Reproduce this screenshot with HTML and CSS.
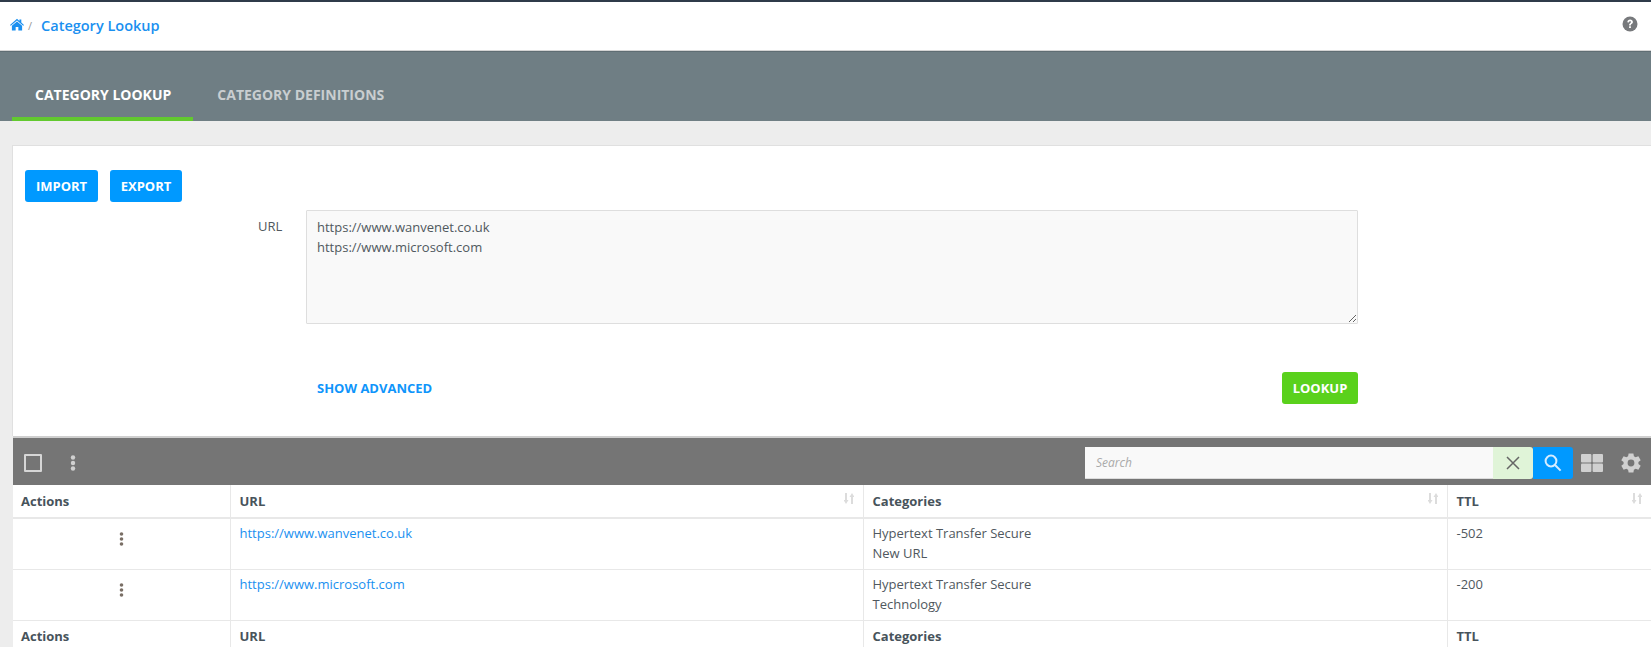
FILE: index.html
```html
<!DOCTYPE html>
<html lang="en">
<head>
<meta charset="utf-8">
<title>Category Lookup</title>
<link rel="stylesheet" href="styles.css">
</head>
<body>
<header class="topbar">
  <nav class="crumbs">
    <svg class="home" viewBox="0 0 26 22" aria-hidden="true"><path d="M13 0.5 L17.5 4.4 V1.5 H21 V7.4 L26 11.8 L24.6 13.4 L13 3.4 L1.4 13.4 L0 11.8 Z M13 5.2 L22.5 13.4 V22 H15.5 V15.5 H10.5 V22 H3.5 V13.4 Z"/></svg>
    <span class="sep">/</span>
    <a class="crumb" href="#">Category Lookup</a>
  </nav>
  <svg class="help" viewBox="0 0 16 16" aria-hidden="true"><circle cx="8" cy="8" r="7.5" fill="#77797c"/><path d="M5.3 6.2 C5.4 4.5 6.6 3.6 8.1 3.6 C9.7 3.6 10.9 4.6 10.9 6 C10.9 7.1 10.2 7.6 9.5 8.1 C9 8.4 8.9 8.7 8.9 9.4 H7.1 C7.1 8.3 7.3 7.7 8.1 7.2 C8.7 6.8 9 6.6 9 6.1 C9 5.6 8.6 5.2 8 5.2 C7.4 5.2 7 5.6 6.9 6.4 Z M7.1 10.2 H8.9 V12.1 H7.1 Z" fill="#fff"/></svg>
</header>

<div class="tabs">
  <a class="tab active" href="#">CATEGORY LOOKUP</a>
  <a class="tab" href="#">CATEGORY DEFINITIONS</a>
</div>

<main class="content">
  <section class="card">
    <div class="actions">
      <button class="btn blue import">IMPORT</button>
      <button class="btn blue export">EXPORT</button>
    </div>
    <div class="field">
      <label class="field-label" for="url">URL</label>
      <textarea class="url-input" id="url" spellcheck="false">https://www.wanvenet.co.uk
https://www.microsoft.com</textarea>
    </div>
    <div class="form-foot">
      <a class="advanced" href="#">SHOW ADVANCED</a>
      <button class="btn green lookup">LOOKUP</button>
    </div>
  </section>

  <section class="grid">
    <div class="toolbar">
      <div class="tool-left">
        <span class="checkbox"></span>
        <svg class="kebab-light" viewBox="0 0 6 16" aria-hidden="true"><circle cx="3" cy="2.5" r="2.2"/><circle cx="3" cy="8" r="2.2"/><circle cx="3" cy="13.5" r="2.2"/></svg>
      </div>
      <div class="tool-right">
        <div class="search">
          <input class="search-input" type="text" placeholder="Search">
          <button class="search-clear" aria-label="Clear"><svg viewBox="0 0 14 14"><path d="M1 1 L13 13 M13 1 L1 13"/></svg></button>
          <button class="search-go" aria-label="Search"><svg viewBox="0 0 18 18"><circle cx="7" cy="7" r="5.4"/><path d="M11 11 L16.6 16.6"/></svg></button>
        </div>
        <svg class="layout-icon" viewBox="0 0 22 18" aria-hidden="true"><rect width="10.4" height="8.4" rx="1"/><rect x="11.6" width="10.4" height="8.4" rx="1"/><rect y="9.6" width="10.4" height="8.4" rx="1"/><rect x="11.6" y="9.6" width="10.4" height="8.4" rx="1"/></svg>
        <svg class="gear" viewBox="0 0 24 24" aria-hidden="true"><path fill-rule="evenodd" d="M19.4 13a7.6 7.6 0 0 0 0-2l2.3-1.8-2.3-4-2.8 1.1a7.6 7.6 0 0 0-1.7-1L14.4 2.4H9.6l-.5 2.9a7.6 7.6 0 0 0-1.7 1L4.6 5.2l-2.3 4L4.6 11a7.6 7.6 0 0 0 0 2l-2.3 1.8 2.3 4 2.8-1.1c.5.4 1.1.7 1.7 1l.5 2.9h4.8l.5-2.9c.6-.3 1.200-.6 1.700-1l2.800 1.100 2.300-4ZM12 15.400a3.400 3.400 0 1 1 0-6.800 3.400 3.400 0 0 1 0 6.800Z"/></svg>
      </div>
    </div>

    <table class="results">
      <colgroup>
        <col class="col-actions"><col class="col-url"><col class="col-cat"><col class="col-ttl">
      </colgroup>
      <thead>
        <tr>
          <th>Actions</th>
          <th class="sortable">URL<svg class="sort" viewBox="0 0 10 11"><path d="M1 0h2v7h1.500L2 11-.5 7H1ZM7 11h2V4h1.500L8 0 5.500 4H7Z"/></svg></th>
          <th class="sortable">Categories<svg class="sort" viewBox="0 0 10 11"><path d="M1 0h2v7h1.500L2 11-.5 7H1ZM7 11h2V4h1.500L8 0 5.500 4H7Z"/></svg></th>
          <th class="sortable">TTL<svg class="sort" viewBox="0 0 10 11"><path d="M1 0h2v7h1.500L2 11-.5 7H1ZM7 11h2V4h1.500L8 0 5.500 4H7Z"/></svg></th>
        </tr>
      </thead>
      <tbody>
        <tr>
          <td class="cell-menu"><svg class="kebab" viewBox="0 0 5 14" aria-hidden="true"><circle cx="2.500" cy="2" r="1.800"/><circle cx="2.500" cy="7" r="1.800"/><circle cx="2.500" cy="12" r="1.800"/></svg></td>
          <td><a href="#">https://www.wanvenet.co.uk</a></td>
          <td>Hypertext Transfer Secure<br>New URL</td>
          <td>-502</td>
        </tr>
        <tr>
          <td class="cell-menu"><svg class="kebab" viewBox="0 0 5 14" aria-hidden="true"><circle cx="2.500" cy="2" r="1.800"/><circle cx="2.500" cy="7" r="1.800"/><circle cx="2.500" cy="12" r="1.800"/></svg></td>
          <td><a href="#">https://www.microsoft.com</a></td>
          <td>Hypertext Transfer Secure<br>Technology</td>
          <td>-200</td>
        </tr>
      </tbody>
      <tfoot>
        <tr>
          <th>Actions</th>
          <th>URL</th>
          <th>Categories</th>
          <th>TTL</th>
        </tr>
      </tfoot>
    </table>
  </section>
</main>
</body>
</html>
```
FILE: styles.css
```css
* { box-sizing: border-box; }

html, body { height: 100%; }

body {
  margin: 0;
  height: 647px;
  overflow: hidden;
  background: #ededed;
  color: #50585e;
  font-family: "Open Sans", sans-serif;
  font-size: 13px;
  line-height: 20px;
}

a { text-decoration: none; color: #1a90f0; }

.topbar {
  height: 51px;
  background: #fff;
  border-top: 2px solid #2f3b4a;
  border-bottom: 1px solid #d4d4d4;
  display: flex;
  align-items: center;
  justify-content: space-between;
  padding: 0 13px 1px 10px;
}

.crumbs { display: flex; align-items: center; }

.home { width: 14px; height: 13px; fill: #1a90f0; margin-bottom: 2px; }

.sep { color: #999; font-size: 11px; margin: 0 9px 0 4px; }

.crumb { font-size: 14.5px; font-weight: 600; }

.help { width: 16px; height: 16px; margin-bottom: 3px; }

.tabs {
  height: 70px;
  background: #6f7e84;
  border-top: 1px solid #5f6d73;
  padding-left: 12px;
  display: flex;
}

.tab {
  height: 69px;
  padding: 33px 23px 0 24px;
  font-size: 14px;
  font-weight: 700;
  color: #c9ced0;
}

.tab.active {
  padding: 33px 22px 0 23px;
  color: #fff;
  border-bottom: 4px solid #62c92f;
}

.content { padding: 24px 0 0 12px; }

.card {
  height: 291px;
  background: #fff;
  border-top: 1px solid #e0e0e0;
  border-left: 1px solid #e0e0e0;
  padding: 24px 0 0 12px;
}

.actions { display: flex; gap: 12px; }

.btn {
  height: 32px;
  border: 0;
  border-radius: 3px;
  color: #fff;
  font-family: inherit;
  font-size: 13px;
  font-weight: 700;
  padding: 0;
}

.blue { background: #0099ff; }
.green { background: #5ad11c; }

.import { width: 73px; }
.export { width: 72px; }
.lookup { width: 76px; }

.field {
  display: flex;
  margin-top: 8px;
  padding-left: 233px;
}

.field-label {
  width: 48px;
  padding-top: 6px;
}

.url-input {
  display: block;
  width: 1052px;
  height: 114px;
  background: #f9f9f9;
  border: 1px solid #dedede;
  border-radius: 1px;
  padding: 6px 10px;
  color: #50585e;
  font: 13px/20px "Open Sans", sans-serif;
  outline: 0;
}

.form-foot {
  width: 1052px;
  margin: 48px 0 0 281px;
  padding-left: 11px;
  display: flex;
  align-items: center;
  justify-content: space-between;
}

.advanced { font-size: 13px; font-weight: 700; color: #0f95fb; }

.grid { background: #fff; margin-left: 1px; }

.toolbar {
  height: 49px;
  background: #757575;
  border-top: 2px solid #cfcfcf;
  display: flex;
  align-items: center;
  justify-content: space-between;
  padding: 2px 10px 0 11px;
}

.tool-left { display: flex; align-items: center; gap: 28px; }

.checkbox {
  width: 18px;
  height: 18px;
  border: 2px solid #d6d6d6;
  border-radius: 1px;
}

.kebab-light { width: 6px; height: 16px; fill: #d0d0d0; }

.tool-right { display: flex; align-items: center; }

.search { display: flex; height: 32px; margin-right: 8px; }

.search-input {
  width: 408px;
  height: 32px;
  border: 0;
  border-bottom: 1px solid #ddd;
  background: #f9f9f9;
  padding: 0 11px;
  font: italic 12px "Open Sans", sans-serif;
  outline: 0;
}

.search-input::placeholder { color: #aaa; opacity: 1; }

.search-clear, .search-go {
  width: 40px;
  height: 32px;
  border: 0;
  padding: 0;
  display: flex;
  align-items: center;
  justify-content: center;
}

.search-clear { background: #e0f4d8; border-radius: 0 3px 3px 0; }
.search-clear svg { width: 14px; height: 14px; fill: none; stroke: #666; stroke-width: 1.500; }

.search-go { background: #0099ff; border-radius: 0 3px 3px 0; }
.search-go svg { width: 18px; height: 18px; fill: none; stroke: #d5ecff; stroke-width: 2; }

.layout-icon { width: 22px; height: 18px; fill: #d0d0d0; margin-right: 16px; }

.gear { width: 24px; height: 24px; fill: #d0d0d0; margin-right: -2px; }

.results {
  width: 1638px;
  table-layout: fixed;
  border-collapse: collapse;
  background: #fff;
}

.col-actions { width: 217px; }
.col-url { width: 633px; }
.col-cat { width: 584px; }
.col-ttl { width: 204px; }

.results th, .results td {
  text-align: left;
  vertical-align: top;
  border-left: 1px solid #e8e8e8;
  padding: 6px 9px;
}

.results th:first-child, .results td:first-child { border-left: 0; padding-left: 8px; }

.results th {
  position: relative;
  font-weight: 700;
  color: #47535b;
}

.results thead th { height: 32px; border-bottom: 2px solid #e8e8e8; }

.results tbody td { height: 51px; padding-top: 4px; padding-bottom: 6px; border-bottom: 1px solid #e8e8e8; }

.results tfoot th { height: 28px; padding-top: 5px; }

.sort {
  position: absolute;
  top: 8px;
  right: 9px;
  width: 10px;
  height: 11px;
  fill: #dcdcdc;
}

.results td.cell-menu { text-align: center; padding: 13px 0 0; }

.kebab { display: block; width: 5px; height: 14px; margin: 0 auto; fill: #7a6f66; }
```
